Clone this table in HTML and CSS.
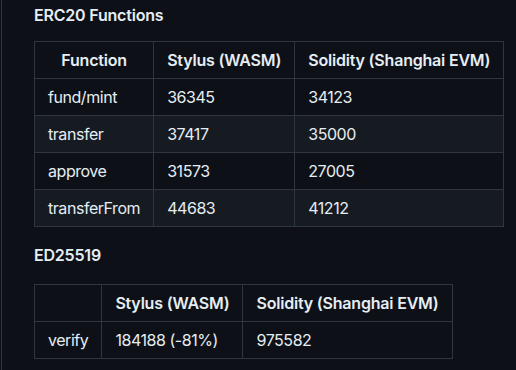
FILE: index.html
```html
<!DOCTYPE html>
<html>
<head>
<meta charset="utf-8">
<link rel="stylesheet" href="styles.css">
</head>
<body>
<div class="page">
  <article class="markdown">
    <h4 class="h-first">ERC20 Functions</h4>
    <table>
      <thead>
        <tr><th>Function</th><th>Stylus (WASM)</th><th>Solidity (Shanghai EVM)</th></tr>
      </thead>
      <tbody>
        <tr><td>fund/mint</td><td>36345</td><td>34123</td></tr>
        <tr><td>transfer</td><td>37417</td><td>35000</td></tr>
        <tr><td>approve</td><td>31573</td><td>27005</td></tr>
        <tr><td>transferFrom</td><td>44683</td><td>41212</td></tr>
      </tbody>
    </table>
    <h4 class="h-second">ED25519</h4>
    <table>
      <thead>
        <tr><th></th><th>Stylus (WASM)</th><th>Solidity (Shanghai EVM)</th></tr>
      </thead>
      <tbody>
        <tr><td>verify</td><td>184188 (-81%)</td><td>975582</td></tr>
      </tbody>
    </table>
  </article>
</div>
</body>
</html>
```
FILE: styles.css
```css
html, body {
  margin: 0;
  padding: 0;
  background: #0d1117;
}
body {
  height: 370px;
  overflow: hidden;
}
.page {
  margin-left: 1px;
  border-left: 1px solid #30363d;
  height: 370px;
  background: #0d1117;
}
.markdown {
  padding-left: 32px;
  padding-top: 5px;
  font-family: Inter, "Liberation Sans", sans-serif;
  font-size: 16px;
  line-height: 1.5;
  letter-spacing: -0.2px;
  color: #e6edf3;
}
h4 {
  margin: 0;
  font-size: 16px;
  font-weight: 600;
  line-height: 1.25;
}
.h-first {
  margin-bottom: 16px;
}
.h-second {
  margin-top: 18px;
  margin-bottom: 19px;
}
table {
  border-collapse: collapse;
  border-spacing: 0;
}
th, td {
  padding: 6px 13px;
  border: 1px solid #30363d;
  white-space: nowrap;
}
th {
  font-weight: 600;
}
td {
  text-align: left;
  letter-spacing: -0.45px;
}
tr {
  background: #0d1117;
}
tbody tr:nth-child(2n) {
  background: #161b22;
}
```
